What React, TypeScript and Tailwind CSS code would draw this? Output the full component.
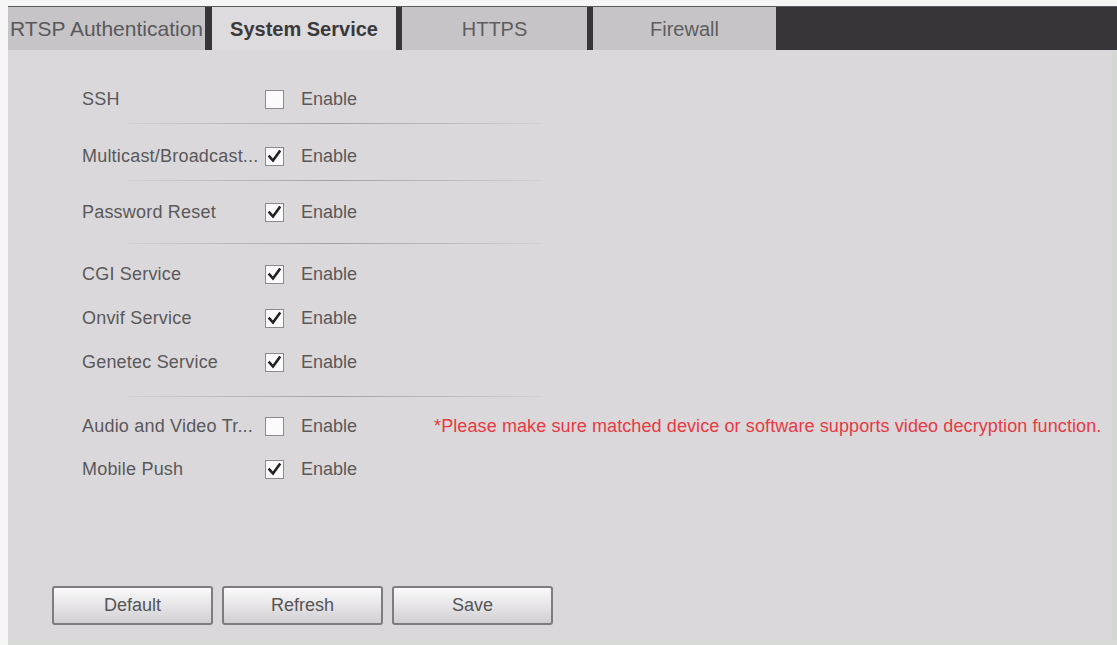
import React from "react";

const font = { fontFamily: '"Liberation Sans", Arial, sans-serif' };

function Check({ checked }: { checked: boolean }) {
  return (
    <div className="w-[19px] h-[19px] border border-[#8c8a8d] bg-[#fbfbfb] flex items-center justify-center shrink-0">
      {checked && (
        <svg width="15" height="15" viewBox="0 0 15 15">
          <path d="M2.5 7.5 L6 11.5 L12.5 2.5" fill="none" stroke="#222" strokeWidth="2.6" strokeLinecap="square" />
        </svg>
      )}
    </div>
  );
}

function Row({ label, checked, h = "h-[44px]", note }: { label: string; checked: boolean; h?: string; note?: string }) {
  return (
    <div className={`flex items-center ${h}`}>
      <div className="w-[183px] text-[18px] text-[#59585a] whitespace-nowrap overflow-hidden tracking-[0.2px]">{label}</div>
      <Check checked={checked} />
      <div className="ml-[17px] text-[18px] text-[#59585a]">Enable</div>
      {note && <div className="ml-[77px] text-[18px] text-[#e73a43] whitespace-nowrap tracking-[0.1px]">{note}</div>}
    </div>
  );
}

function Line({ mt }: { mt: string }) {
  return <div className={`${mt} ml-[45px] w-[415px] h-px bg-linear-to-r from-[#d3d0d3] via-[#a3a1a4] to-[#d3d0d3]`} />;
}

function Btn({ children }: { children: React.ReactNode }) {
  return (
    <button className="w-[161px] h-[39px] border-2 border-[#7e7c7f] rounded-[3px] bg-linear-to-b from-[#fbfafb] to-[#d1cfd2] text-[18px] text-[#555456] flex items-center justify-center">
      {children}
    </button>
  );
}

export default function App() {
  return (
    <div style={font} className="w-[1117px] h-[645px] bg-[#f6f6f6] pt-[6px] pl-[8px] flex flex-col overflow-hidden">
      <div className="h-[44px] border-t border-[#5c5a5d] flex shrink-0">
        <div className="w-[197px] bg-[#c6c4c7] overflow-hidden flex items-center justify-center text-[21px] text-[#59585a] whitespace-nowrap">
          RTSP Authentication
        </div>
        <div className="w-[7px] bg-[#38353a]" />
        <div className="w-[184px] bg-[#dedbde] flex items-center justify-center text-[20px] font-bold text-[#3a393b]">
          System Service
        </div>
        <div className="w-[6px] bg-[#38353a]" />
        <div className="w-[185px] bg-[#c6c4c7] flex items-center justify-center text-[20px] text-[#5e5d5f]">HTTPS</div>
        <div className="w-[6px] bg-[#38353a]" />
        <div className="w-[183px] bg-[#c6c4c7] flex items-center justify-center text-[20px] text-[#5e5d5f]">Firewall</div>
        <div className="flex-1 bg-[#37343a]" />
      </div>
      <div className="flex">
        <div className="w-[1104px] h-[590px] bg-[#dbd8db] flex flex-col pt-[27px] pl-[74px] pb-[15px]">
          <Row label="SSH" checked={false} />
          <Line mt="mt-[2px]" />
          <div className="mt-[10px]">
            <Row label="Multicast/Broadcast..." checked />
          </div>
          <Line mt="mt-[2px]" />
          <div className="mt-[9px]">
            <Row label="Password Reset" checked />
          </div>
          <Line mt="mt-[9px]" />
          <div className="mt-[8px]">
            <Row label="CGI Service" checked />
            <Row label="Onvif Service" checked />
            <Row label="Genetec Service" checked />
          </div>
          <Line mt="mt-[12px]" />
          <div className="mt-[8px]">
            <Row
              label="Audio and Video Tr..."
              checked={false}
              h="h-[43px]"
              note="*Please make sure matched device or software supports video decryption function."
            />
            <Row label="Mobile Push" checked h="h-[43px]" />
          </div>
          <div className="mt-auto flex gap-[9px] -ml-[30px]">
            <Btn>Default</Btn>
            <Btn>Refresh</Btn>
            <Btn>Save</Btn>
          </div>
        </div>
        <div className="w-[5px] h-[590px] bg-[#d3d6d3]" />
      </div>
      <div className="h-[5px] w-[1109px] bg-[#d8dad8]" />
    </div>
  );
}
